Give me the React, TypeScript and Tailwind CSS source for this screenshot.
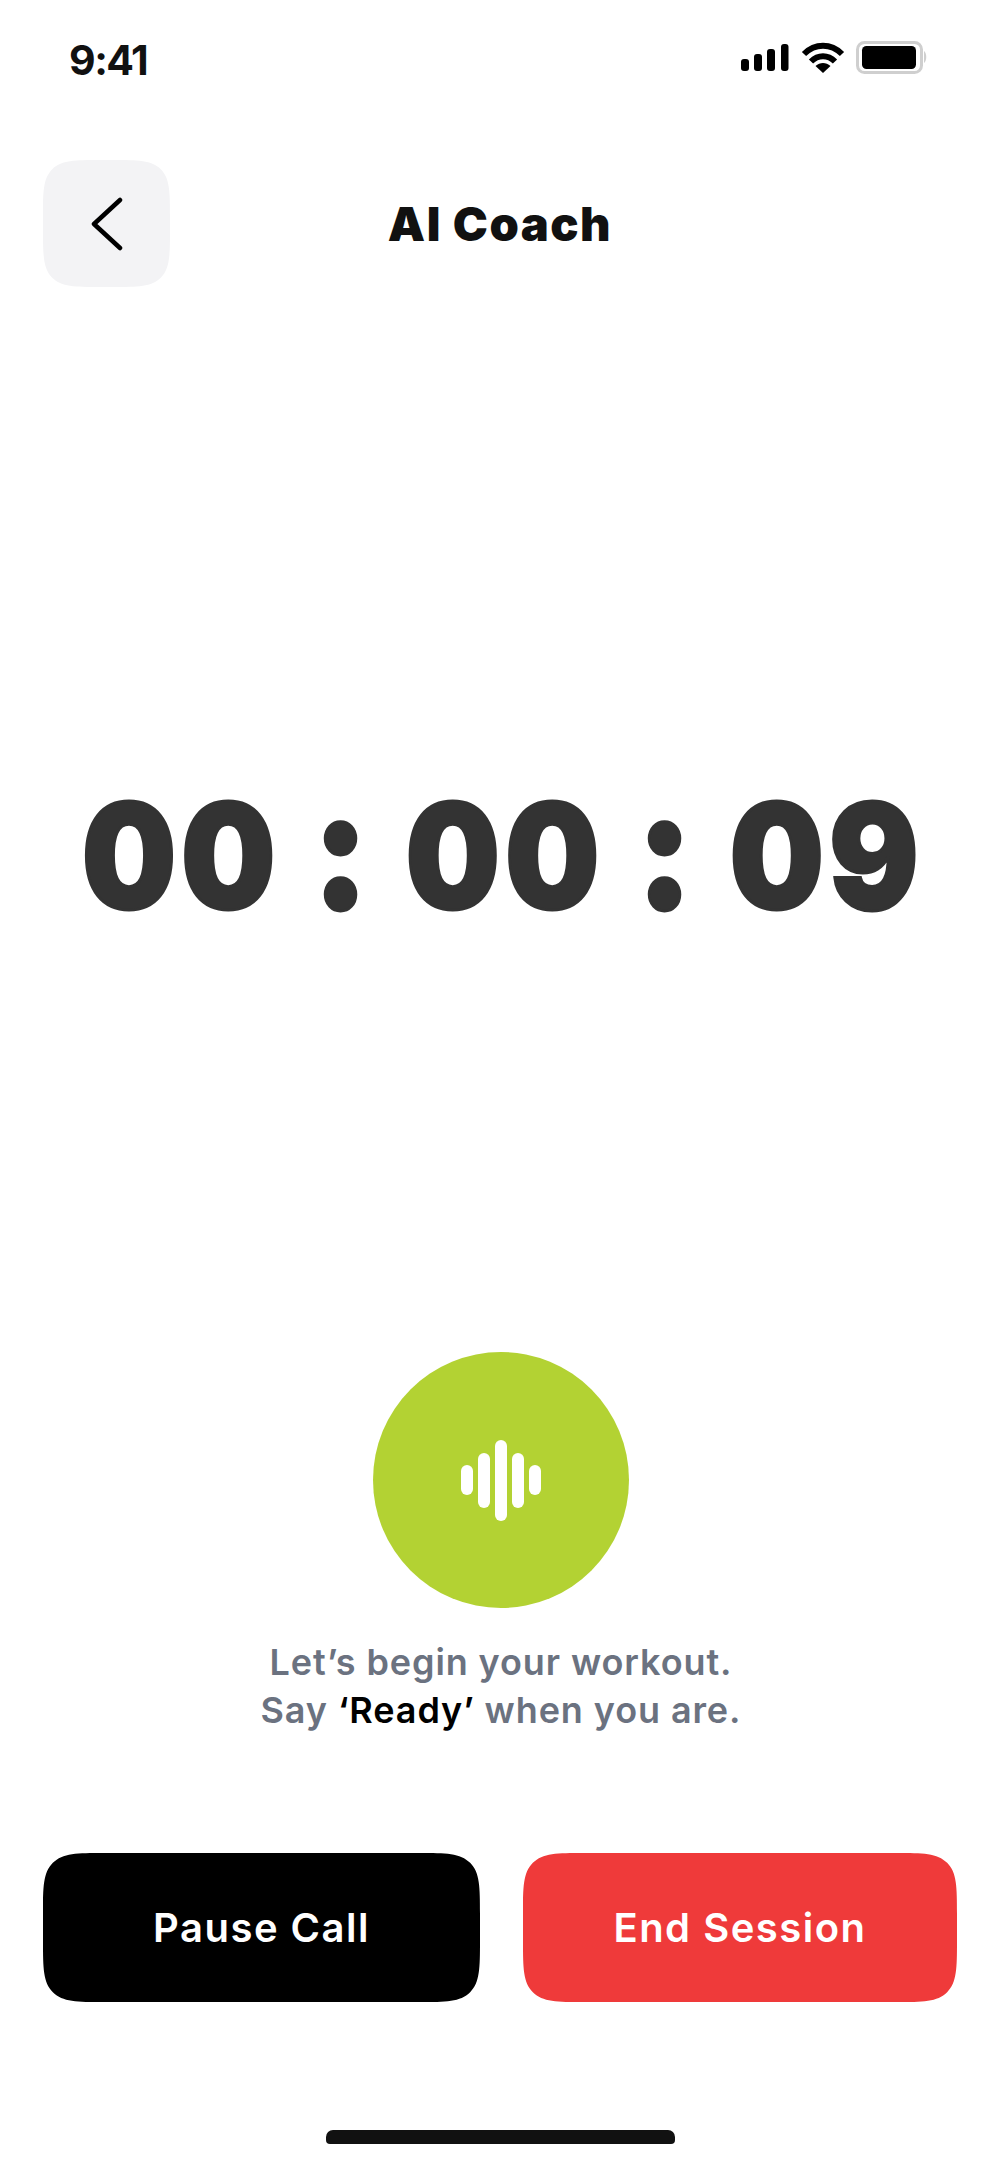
import type { FC } from 'react';

const StatusBar: FC = () => {
  return (
    <div className="h-[160px] pl-[69px] pr-[71px] pt-[36px] flex justify-between items-start">
      <span className="text-[41px] leading-[48px] font-bold tracking-[-1.5px] text-[#111]">9:41</span>
      <div className="flex items-start pt-[5px]">
        <svg width="190" height="34" viewBox="0 0 190 34" fill="none">
          {/* signal */}
          <rect x="2" y="18" width="8" height="12" rx="3" fill="#000" />
          <rect x="15" y="13" width="8" height="17" rx="3" fill="#000" />
          <rect x="28" y="8" width="8" height="22" rx="3" fill="#000" />
          <rect x="42" y="3" width="7.500" height="27" rx="3" fill="#000" />
          {/* wifi */}
          <path d="M65 13 C76 2 92 2 103 13" stroke="#000" strokeWidth="6" />
          <path d="M72 20.500 C79 13.500 89 13.500 96 20.500" stroke="#000" strokeWidth="6" />
          <path d="M76.500 25 C81 21 87 21 91.500 25 L84 32 Z" fill="#000" />
          {/* battery */}
          <rect x="118.500" y="1.500" width="64" height="30" rx="7" stroke="#cfcfcf" strokeWidth="3" />
          <rect x="123" y="5" width="54" height="23" rx="4.500" fill="#000" />
          <path d="M185 10 C188 12 188 20 185 22 Z" fill="#cfcfcf" />
        </svg>
      </div>
    </div>
  );
};

const VoiceBars: FC = () => {
  return (
    <div className="w-[256px] h-[256px] rounded-full bg-[#b3d233] flex items-center justify-center gap-[4.500px]">
      <div className="w-[12.500px] h-[30px] rounded-full bg-white" />
      <div className="w-[12.500px] h-[55px] rounded-full bg-white" />
      <div className="w-[12.500px] h-[81px] rounded-full bg-white" />
      <div className="w-[12.500px] h-[55px] rounded-full bg-white" />
      <div className="w-[12.500px] h-[30px] rounded-full bg-white" />
    </div>
  );
};

export default function App() {
  return (
    <div className="w-[1000px] h-[2165px] bg-white flex flex-col font-['Inter',sans-serif] overflow-hidden">
      <StatusBar />

      <div className="grid grid-cols-[127px_1fr_127px] items-center px-[43px]">
        <button className="w-[127px] h-[127px] rounded-[58px] [corner-shape:squircle] bg-[#f3f3f5] flex items-center justify-center">
          <svg width="34" height="54" viewBox="0 0 34 54" fill="none">
            <path d="M30 3 L4 27 L30 51" stroke="#000" strokeWidth="4.500" strokeLinecap="round" strokeLinejoin="round" />
          </svg>
        </button>
        <h1 className="text-center text-[47px] leading-[56px] font-black tracking-[1.500px] text-[#111]">AI Coach</h1>
      </div>

      <div className="mt-[481px] pl-[6px] h-[160px] flex justify-center">
        <p className="text-[146px] leading-[160px] font-black text-[#333] tracking-[5.500px] [-webkit-text-stroke:3px_#333] scale-x-[.91] whitespace-nowrap">
          00 <span className="text-[168px]">:</span> 00 <span className="text-[168px]">:</span> 09
        </p>
      </div>

      <div className="mt-[424px] pl-[2px] flex flex-col items-center">
        <VoiceBars />
        <p className="mt-[30px] text-center text-[36px] leading-[48px] font-semibold tracking-[0.900px] text-[#6b7280]">
          Let’s begin your workout.
          <br />
          Say <span className="text-black">‘Ready’</span> when you are.
        </p>
      </div>

      <div className="mt-[119px] px-[43px] flex gap-[43px]">
        <button className="w-[437px] h-[149px] rounded-[62px] [corner-shape:squircle] bg-black text-white text-[40px] font-semibold tracking-[1.500px]">
          Pause Call
        </button>
        <button className="w-[434px] h-[149px] rounded-[62px] [corner-shape:squircle] bg-[#ef3a3a] text-white text-[40px] font-semibold tracking-[1.500px]">
          End Session
        </button>
      </div>

      <div className="mt-[128px] mx-auto w-[349px] h-[14px] rounded-t-[7px] rounded-b-[4px] bg-[#111]" />
    </div>
  );
}
